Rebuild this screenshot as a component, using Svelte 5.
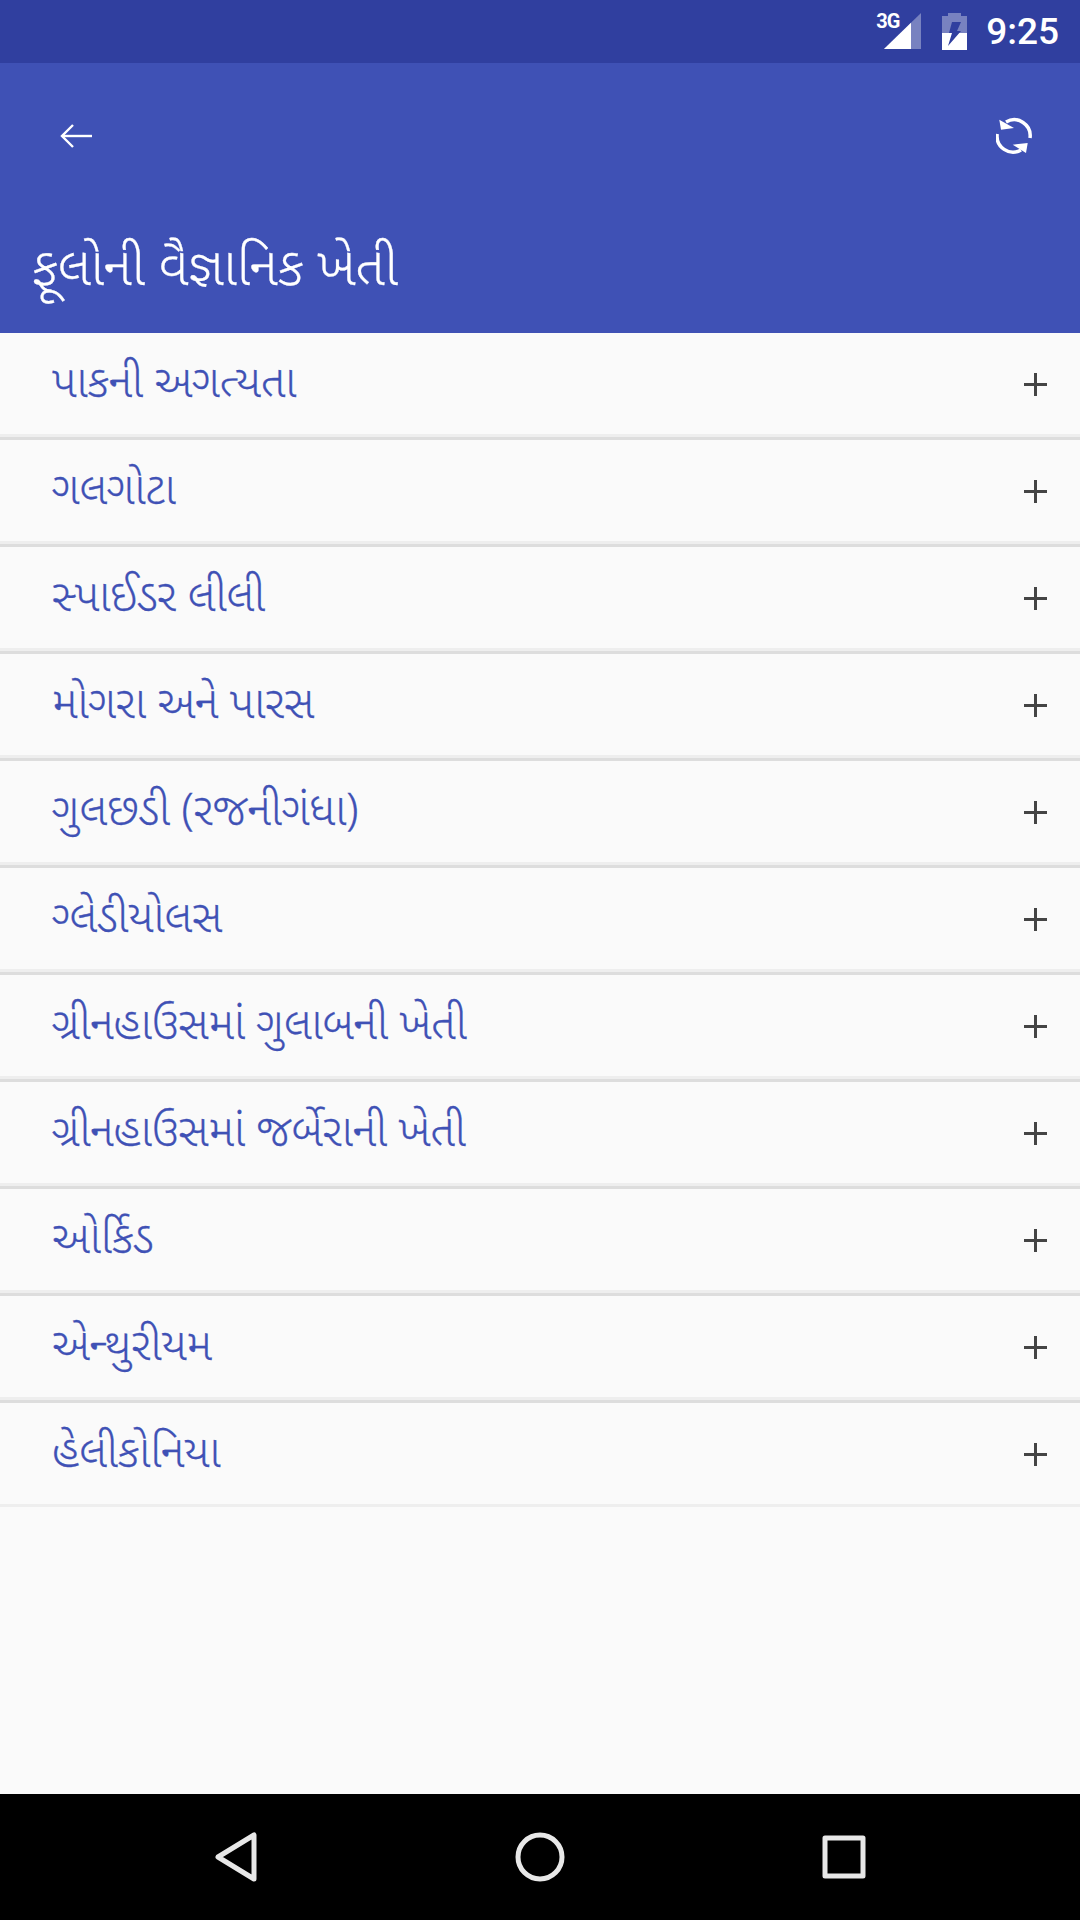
<script>
  const topics = [
    'પાકની અગત્યતા',
    'ગલગોટા',
    'સ્પાઈડર લીલી',
    'મોગરા અને પારસ',
    'ગુલછડી (રજનીગંધા)',
    'ગ્લેડીયોલસ',
    'ગ્રીનહાઉસમાં ગુલાબની ખેતી',
    'ગ્રીનહાઉસમાં જર્બેરાની ખેતી',
    'ઓર્કિડ',
    'એન્થુરીયમ',
    'હેલીકોનિયા'
  ];
</script>

<div class="screen">
  <header class="status">
    <div class="net">
      <span class="net__label">3G</span>
      <svg width="37" height="36" viewBox="0 0 37 36">
        <path d="M37 0V36H0Z" fill="#fff" fill-opacity="0.35"/>
        <path d="M27 9.700V36H0Z" fill="#fff"/>
      </svg>
    </div>
    <svg class="battery" width="25" height="37" viewBox="0 0 25 37">
      <path d="M6 0h13v3h6v34H0V3h6Z" fill="#fff" fill-opacity="0.35"/>
      <path d="M0 20h25v17H0Z" fill="#fff"/>
      <path d="M10 9h9l-4 9h4L6 33l4-13H7Z" fill="#303f9f"/>
    </svg>
    <span class="clock">9:25</span>
  </header>

  <div class="toolbar">
    <div class="toolbar__row">
      <svg class="back" width="33" height="24" viewBox="0 0 33 24" fill="none" stroke="#fff" stroke-width="2.400">
        <path d="M32 12H2"/>
        <path d="M13 1 2 12l11 11"/>
      </svg>
      <svg class="refresh" width="36" height="38" viewBox="0 0 36 38" fill="none">
        <path d="M10 5A16 16 0 0 1 34 21" stroke="#fff" stroke-width="3.500"/>
        <path d="M25 33A16 16 0 0 1 1.200 17" stroke="#fff" stroke-width="3.500"/>
        <path d="M3.300 2.700 18 11 5 12.700Z" fill="#fff"/>
        <path d="M30 36 16.700 27.700 31.700 26Z" fill="#fff"/>
      </svg>
    </div>
    <h1 class="title">ફૂલોની વૈજ્ઞાનિક ખેતી</h1>
  </div>

  <ul class="list">
    {#each topics as topic}
      <li class="item">
        <span class="item__label">{topic}</span>
        <svg class="plus" width="23" height="23" viewBox="0 0 23 23" fill="#444">
          <path d="M10 0h3v23h-3Z"/>
          <path d="M0 10h23v3H0Z"/>
        </svg>
      </li>
    {/each}
  </ul>

  <nav class="nav">
    <svg width="42" height="50" viewBox="0 0 42 50" fill="none" stroke="#e8e8e8" stroke-width="5" stroke-linejoin="round">
      <path d="M39 3V47L3 25Z"/>
    </svg>
    <svg width="50" height="50" viewBox="0 0 50 50" fill="none" stroke="#e8e8e8" stroke-width="5">
      <circle cx="25" cy="25" r="22"/>
    </svg>
    <svg width="44" height="44" viewBox="0 0 44 44" fill="none" stroke="#e8e8e8" stroke-width="5" stroke-linejoin="round">
      <path d="M3 3H41V41H3Z"/>
    </svg>
  </nav>
</div>

<style>
  :global(body) { margin: 0; background: #fafafa; }

  .screen {
    display: flex; flex-direction: column;
    width: 1080px; height: 1920px; overflow: hidden;
    background: #fafafa;
    font-family: "Noto Sans", "Noto Sans Gujarati", Roboto, sans-serif;
  }

  .status {
    display: flex; align-items: center; justify-content: flex-end;
    height: 63px; flex: none; padding-right: 21px; box-sizing: border-box;
    background: #303f9f; color: #fff;
  }
  .net { position: relative; width: 37px; height: 36px; margin-right: 21px; margin-top: -1px; }
  .net__label {
    position: absolute; left: -8px; top: 0;
    font: 700 20px/17px Roboto, sans-serif; letter-spacing: -1px;
  }
  .net svg { display: block; }
  .battery { margin-right: 19px; margin-top: -1px; }
  .clock { font: 500 37px/1 Roboto, sans-serif; margin-top: -1px; }

  .toolbar {
    display: flex; flex-direction: column; flex: none;
    height: 270px; box-sizing: border-box;
    background: #3f51b5; color: #fff;
  }
  .toolbar__row {
    display: flex; align-items: center; justify-content: space-between;
    height: 146px; padding: 0 48px 0 60px;
  }
  .title {
    margin: 0; padding: 26px 0 0 32px;
    font-size: 52.800px; font-weight: 300; line-height: 60px;
    -webkit-text-stroke: 0.3px currentColor;
  }

  .list { display: flex; flex-direction: column; gap: 3px; margin: 0; padding: 0; list-style: none; }
  .item {
    position: relative;
    display: flex; align-items: center; justify-content: space-between;
    height: 101px; padding: 0 33px 0 52px;
    border-bottom: 3px solid #eee;
  }
  .item:not(:last-child)::after {
    content: ""; position: absolute; left: 0; right: 0; bottom: -6px; height: 3px;
    background: #ddd;
  }
  .item__label {
    font-size: 44px; font-weight: 300; color: #3f51b5; line-height: 50px; margin-top: -7px;
    -webkit-text-stroke: 0.3px currentColor;
  }
  .plus { margin-top: 2px; }

  .nav {
    display: flex; align-items: center; justify-content: space-between;
    margin-top: auto; height: 126px; padding: 0 214px 0 215px;
    background: #000;
  }
</style>
